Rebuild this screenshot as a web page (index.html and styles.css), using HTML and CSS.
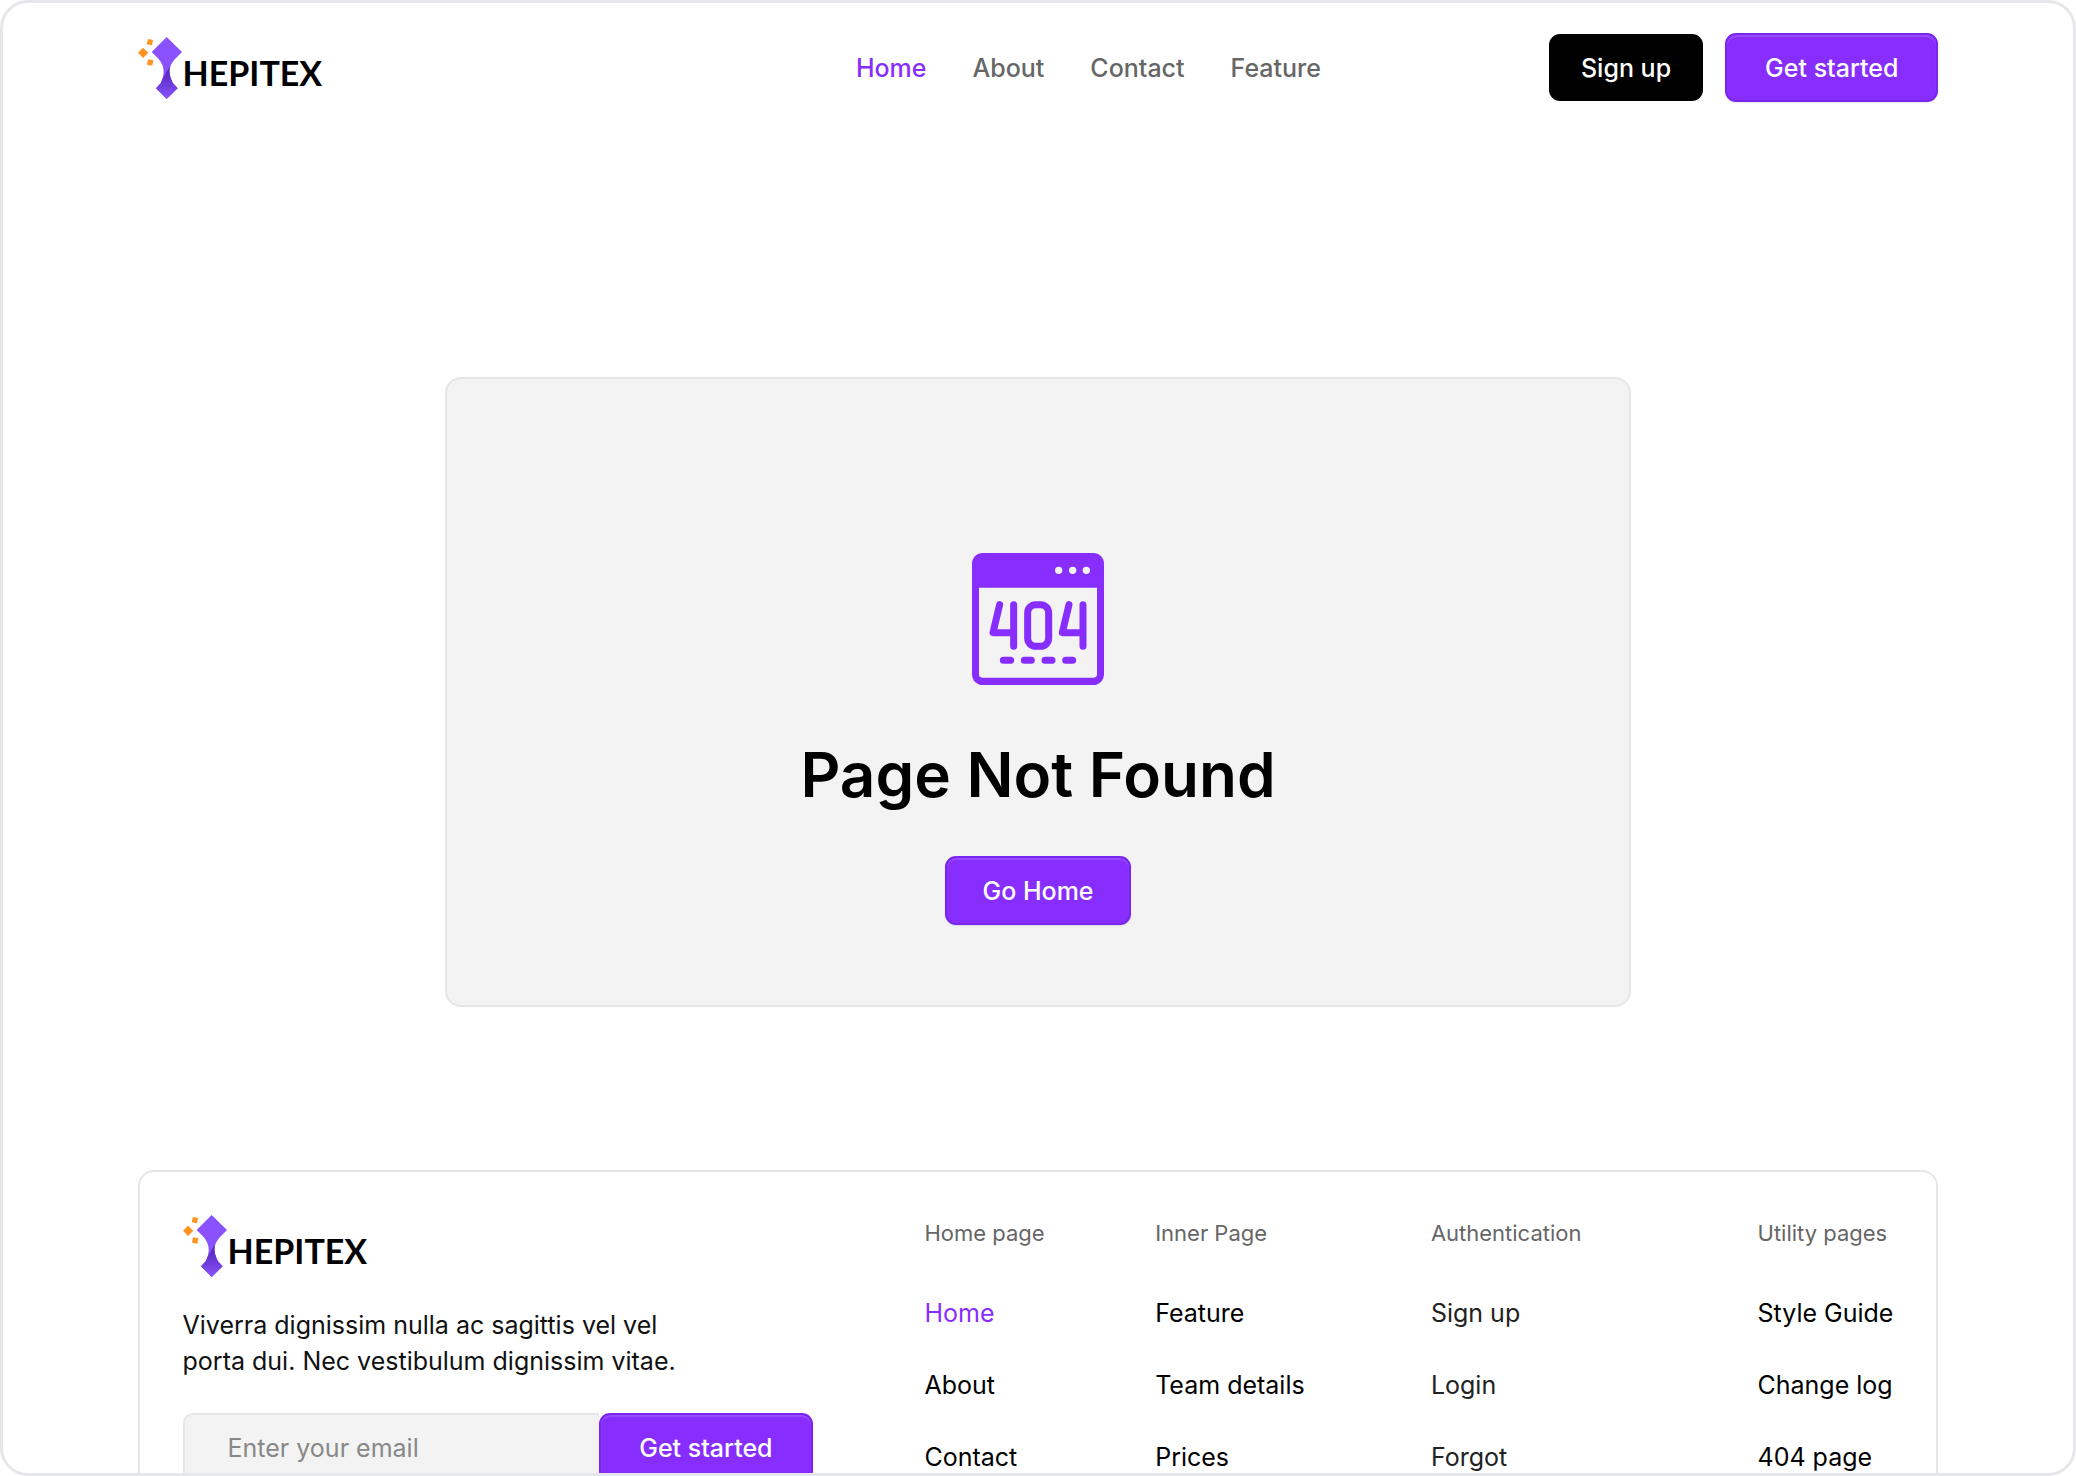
FILE: index.html
```html
<!DOCTYPE html>
<html lang="en">
<head>
    <meta charset="UTF-8">
    <meta name="viewport" content="width=device-width, initial-scale=1.0">
    <title>Hepitex - Page Not Found</title>
    <link rel="stylesheet" href="styles.css">
</head>
<body>
    <div class="page">
        <header class="container header">
            <a href="#" class="logo">
                <svg class="logo-mark" viewBox="0 0 132 186" aria-hidden="true">
                    <defs>
                        <linearGradient id="shade" x1="0" y1="0" x2="0" y2="1">
                            <stop offset="0" stop-color="#5226b4"/>
                            <stop offset="0.4" stop-color="#6534d0"/>
                            <stop offset="1" stop-color="#8a54fb"/>
                        </linearGradient>
                    </defs>
                    <path fill="#8a52ff" d="M86 0l46 45-21 21c-21 24-21 44-6 73l14 15-33 32-32-32 14-15c13-29 13-49-6-73L41 45z"/>
                    <path fill="url(#shade)" d="M95 89C93 108 96 122 105 139l14 15-33 32-32-32 14-15C74 124 84 108 95 89z"/>
                    <path fill="#ff9320" d="M15 32l16 15-16 16L0 47zM30 6l15 3-3 16-16-3zM30 67l16 3-3 16-16-3z"/>
                </svg>
                <span>HEPITEX</span>
            </a>
            <nav class="nav">
                <a href="#" class="active">Home</a>
                <a href="#">About</a>
                <a href="#">Contact</a>
                <a href="#">Feature</a>
            </nav>
            <div class="actions">
                <button type="button" class="btn btn-dark">Sign up</button>
                <button type="button" class="btn btn-wide">Get started</button>
            </div>
        </header>

        <main class="not-found">
            <svg class="not-found-icon" viewBox="0 0 396 396" role="img" aria-label="Error 404">
                <rect width="396" height="396" rx="32" fill="#872eff"/>
                <path d="M21 104h354v260q0 10-10 10H31q-10 0-10-10z" fill="#f3f3f3"/>
                <g fill="#f3f3f3">
                    <circle cx="260" cy="52" r="11"/>
                    <circle cx="302" cy="52" r="11"/>
                    <circle cx="343" cy="52" r="11"/>
                </g>
                <g fill="none" stroke="#872eff" stroke-width="21" stroke-linecap="round" stroke-linejoin="round">
                    <path d="M83 155L63 239h62M125 155v125M291 155l-20 84h62M333 155v125"/>
                    <rect x="167" y="155" width="63" height="125" rx="24"/>
                    <path d="M94 322h22M157 322h21M219 322h21M281 322h21"/>
                </g>
            </svg>
            <h1>Page Not Found</h1>
            <button type="button" class="btn">Go Home</button>
        </main>

        <footer class="container footer">
            <div class="about">
                <a href="#" class="logo">
                    <svg class="logo-mark" viewBox="0 0 132 186" aria-hidden="true">
                        <path fill="#8a52ff" d="M86 0l46 45-21 21c-21 24-21 44-6 73l14 15-33 32-32-32 14-15c13-29 13-49-6-73L41 45z"/>
                        <path fill="url(#shade)" d="M95 89C93 108 96 122 105 139l14 15-33 32-32-32 14-15C74 124 84 108 95 89z"/>
                        <path fill="#ff9320" d="M15 32l16 15-16 16L0 47zM30 6l15 3-3 16-16-3zM30 67l16 3-3 16-16-3z"/>
                    </svg>
                    <span>HEPITEX</span>
                </a>
                <p>Viverra dignissim nulla ac sagittis vel vel<br>porta dui. Nec vestibulum dignissim vitae.</p>
                <form class="subscribe">
                    <input type="email" name="email" placeholder="Enter your email" aria-label="Email">
                    <button type="submit" class="btn btn-wide">Get started</button>
                </form>
            </div>
            <div class="links">
                <div class="links-column">
                    <h2>Home page</h2>
                    <a href="#" class="active">Home</a>
                    <a href="#">About</a>
                    <a href="#">Contact</a>
                </div>
                <div class="links-column">
                    <h2>Inner Page</h2>
                    <a href="#">Feature</a>
                    <a href="#">Team details</a>
                    <a href="#">Prices</a>
                </div>
                <div class="links-column muted">
                    <h2>Authentication</h2>
                    <a href="#">Sign up</a>
                    <a href="#">Login</a>
                    <a href="#">Forgot</a>
                </div>
                <div class="links-column">
                    <h2>Utility pages</h2>
                    <a href="#">Style Guide</a>
                    <a href="#">Change log</a>
                    <a href="#">404 page</a>
                </div>
            </div>
        </footer>
    </div>
</body>
</html>
```
FILE: styles.css
```css
* {
    box-sizing: border-box;
}
body {
    margin: 0;
    font-family: Inter, "Liberation Sans", sans-serif;
    font-size: 25px;
    line-height: 36px;
    color: #000;
    background-color: #fff;
}
a {
    color: inherit;
    text-decoration: none;
}
.page {
    height: 100vh;
    overflow: hidden;
    border: 3px solid #e6e7eb;
    border-radius: 28px;
}
.container {
    width: 87%;
    margin: 0 auto;
}
.header {
    display: flex;
    align-items: center;
    padding-top: 30px;
}
.logo {
    display: flex;
    align-items: center;
    gap: 1px;
    font-family: Lato, sans-serif;
    font-size: 34px;
    font-weight: bold;
}
.logo span {
    padding-top: 10px;
}
.logo-mark {
    width: 44px;
    height: 62px;
}
.nav {
    display: flex;
    gap: 46px;
    margin-left: auto;
    margin-right: 228px;
    font-weight: 500;
    color: #666;
}
.active {
    color: #872eff;
}
.actions {
    display: flex;
    align-items: center;
    gap: 22px;
}
.btn {
    height: 69px;
    padding: 0 35px;
    border: 2px solid #7a25ee;
    border-radius: 11px;
    background-color: #872eff;
    box-shadow: inset 0 2px 1px rgba(255,255,255,0.15), 0 1px 2px rgba(0,0,0,0.1);
    color: #fff;
    font: inherit;
    font-weight: 500;
    white-space: nowrap;
    cursor: pointer;
}
.btn-wide {
    padding: 0 38px;
}
.btn-dark {
    height: 67px;
    padding: 0 30px;
    border-color: #000;
    background-color: #000;
    box-shadow: none;
}
.not-found {
    display: flex;
    flex-direction: column;
    align-items: center;
    max-width: 1186px;
    margin: 275px auto 163px;
    padding: 174px 20px 80px;
    border: 2px solid #e6e6e6;
    border-radius: 16px;
    background-color: #f3f3f3;
}
.not-found-icon {
    width: 132px;
    height: 132px;
}
.not-found h1 {
    margin: 54px 0 45px;
    font-size: 62px;
    font-weight: 600;
    line-height: 72px;
}
.footer {
    display: flex;
    justify-content: space-between;
    gap: 40px;
    padding: 43px;
    border: 2px solid #e6e6e6;
    border-radius: 16px;
}
.about {
    width: 630px;
}
.about p {
    margin: 30px 0 34px;
    color: #111;
}
.subscribe {
    display: flex;
}
.subscribe input {
    flex: 1;
    min-width: 0;
    padding: 0 43px;
    border: 2px solid #e6e6e6;
    border-right: none;
    border-radius: 10px 0 0 10px;
    background-color: #f3f3f3;
    font: inherit;
}
.subscribe input::placeholder {
    color: #888;
}
.links {
    display: grid;
    grid-template-columns: 231fr 276fr 327fr 135fr;
    width: 969px;
}
.links-column {
    display: flex;
    flex-direction: column;
    gap: 36px;
    white-space: nowrap;
}
.links-column h2 {
    margin: 0 0 8px;
    font-size: 22px;
    font-weight: normal;
    color: #666;
}
.muted a {
    color: #222;
}
```
